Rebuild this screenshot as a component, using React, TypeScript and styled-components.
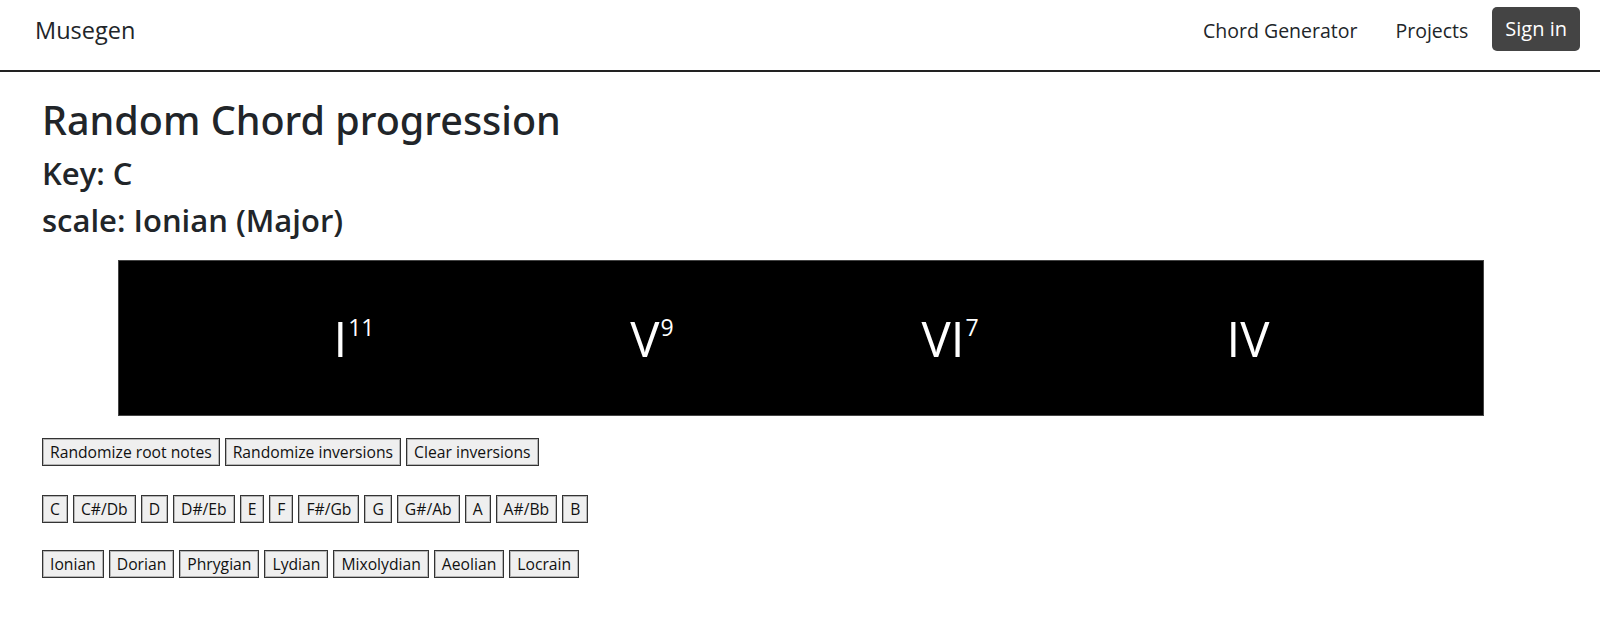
import React from "react";
import styled, { createGlobalStyle } from "styled-components";

const GlobalStyle = createGlobalStyle`
	* {
		box-sizing: border-box;
	}
	body {
		margin: 0;
		font-family: "Open Sans", "Noto Sans", sans-serif;
		color: #212529;
		background: #ffffff;
	}
`;

const Navbar = styled.nav`
	display: flex;
	align-items: center;
	height: 72px;
	padding: 0 20px 13px 35px;
	border-bottom: 2px solid #222;
	.brand {
		font-size: 23.5px;
		color: #212529;
		margin-right: auto;
		padding-top: 3px;
	}
`;

const NavLink = styled.a<{ $gap: number }>`
	font-size: 19.5px;
	color: #212529;
	text-decoration: none;
	padding-top: 3px;
	margin-right: ${(p) => p.$gap}px;
`;

const SignIn = styled.button`
	font-family: inherit;
	font-size: 20px;
	color: #fff;
	background: #444;
	border: none;
	border-radius: 5px;
	height: 44px;
	padding: 0 13px;
`;

const Main = styled.main`
	padding: 0 42px;
	h1 {
		font-family: "Noto Sans", "Open Sans", sans-serif;
		font-size: 39.5px;
		font-weight: 500;
		line-height: 48px;
		margin: 24px 0 0;
	}
	h3 {
		font-size: 31px;
		font-weight: 600;
		line-height: 36px;
		margin: 11px 0 0;
	}
	h3 + h3 {
		margin-top: 11px;
	}
`;

const ChordBoard = styled.div`
	display: flex;
	justify-content: center;
	align-items: center;
	width: 1366px;
	height: 156px;
	margin: 22px 0 0 76px;
	background: #000;
	border: 1px solid #444;
`;

const Chord = styled.div`
	width: 298px;
	text-align: center;
	color: #fff;
	font-size: 49px;
	line-height: 66px;
	sup {
		font-size: 23px;
		line-height: 0;
		vertical-align: 21px;
		margin-left: 1px;
	}
`;

const ButtonRow = styled.div<{ $top: number }>`
	display: flex;
	gap: 5px;
	margin-top: ${(p) => p.$top}px;
`;

const PlainButton = styled.button`
	font-family: inherit;
	font-size: 15.7px;
	line-height: 22px;
	color: #111;
	background: #efefef;
	border: 1px solid #333;
	box-shadow: inset 0 0 0 1px #b5b5b5;
	border-radius: 0;
	padding: 2px 7px;
`;

const chords = [
	{ numeral: "I", ext: "11" },
	{ numeral: "V", ext: "9" },
	{ numeral: "VI", ext: "7" },
	{ numeral: "IV", ext: "" },
];

const keys = ["C", "C#/Db", "D", "D#/Eb", "E", "F", "F#/Gb", "G", "G#/Ab", "A", "A#/Bb", "B"];
const scales = ["Ionian", "Dorian", "Phrygian", "Lydian", "Mixolydian", "Aeolian", "Locrain"];

export default function App() {
	return (
		<>
			<GlobalStyle />
			<Navbar>
				<span className={"brand"}>Musegen</span>
				<NavLink href="#" $gap={38}>Chord Generator</NavLink>
				<NavLink href="#" $gap={24}>Projects</NavLink>
				<SignIn>Sign in</SignIn>
			</Navbar>
			<Main>
				<h1>Random Chord progression</h1>
				<h3>Key: C</h3>
				<h3>scale: Ionian (Major)</h3>
				<ChordBoard>
					{chords.map((c) => (
						<Chord key={c.numeral}>
							{c.numeral}
							{c.ext && <sup>{c.ext}</sup>}
						</Chord>
					))}
				</ChordBoard>
				<ButtonRow $top={22}>
					<PlainButton>Randomize root notes</PlainButton>
					<PlainButton>Randomize inversions</PlainButton>
					<PlainButton>Clear inversions</PlainButton>
				</ButtonRow>
				<ButtonRow $top={29}>
					{keys.map((k) => (
						<PlainButton key={k}>{k}</PlainButton>
					))}
				</ButtonRow>
				<ButtonRow $top={27}>
					{scales.map((s) => (
						<PlainButton key={s}>{s}</PlainButton>
					))}
				</ButtonRow>
			</Main>
		</>
	);
}
